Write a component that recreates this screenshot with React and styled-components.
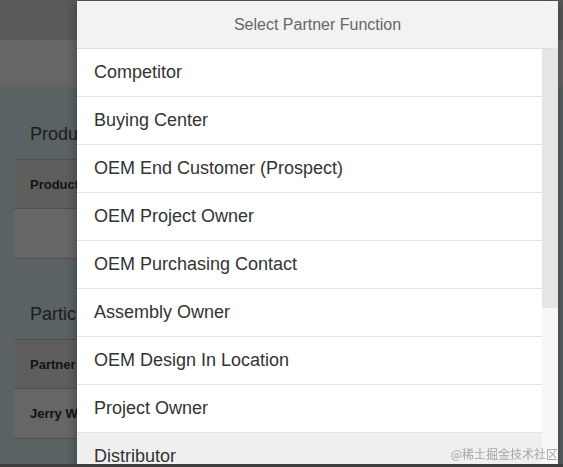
import styled, { createGlobalStyle } from "styled-components";

const GlobalStyle = createGlobalStyle`
  html, body {
    margin: 0;
    padding: 0;
    height: 100%;
    overflow: hidden;
  }
  body {
    font-family: "Liberation Sans", Arial, sans-serif;
    background: #e1f4f9;
  }
`;

const Page = styled.div`
  height: 100vh;
  display: flex;
  flex-direction: column;
`;

const TopBar = styled.div`
  height: 40px;
  background: #e0e0e0;
`;

const SubBar = styled.div`
  height: 47px;
  background: #ffffff;
`;

const Content = styled.div`
  flex: 1;
  padding: 0 14px;
  background: #e1f4f9;
`;

const Section = styled.section`
  padding-top: 35px;
`;

const SectionTitle = styled.h2`
  margin: 0 0 13px 16px;
  font-size: 18px;
  line-height: 24px;
  font-weight: normal;
  color: #4a4a4a;
`;

const Table = styled.div`
  border-top: 1px solid #c8c8c8;
  border-bottom: 1px solid #c8c8c8;
  margin-bottom: 8px;
`;

const Row = styled.div`
  display: grid;
  grid-template-columns: 529px 1fr;
  align-items: center;
  height: ${(p) => (p.$head ? 48 : 49)}px;
  background: ${(p) => (p.$head ? "#ebebe6" : "#ffffff")};
  border-top: ${(p) => (p.$head ? "none" : "1px solid #c8c8c8")};
`;

const Cell = styled.div`
  padding-left: 16px;
  font-size: 13px;
  font-weight: bold;
  color: #333;
  white-space: nowrap;
  overflow: hidden;
`;

const Overlay = styled.div`
  position: fixed;
  inset: 0;
  background: rgba(0, 0, 0, 0.6);
`;

const Dialog = styled.div`
  position: fixed;
  top: 1px;
  left: 77px;
  width: 481px;
  bottom: -120px;
  background: #fff;
  display: flex;
  flex-direction: column;
  box-shadow: 0 0 12px rgba(0, 0, 0, 0.35);
`;

const DialogHeader = styled.div`
  height: 47px;
  flex: none;
  display: flex;
  align-items: center;
  justify-content: center;
  background: #f2f2f2;
  border-bottom: 1px solid #dedede;
  font-size: 16px;
  color: #666;
`;

const ListArea = styled.div`
  flex: 1;
  display: flex;
  min-height: 0;
`;

const List = styled.ul`
  flex: 1;
  margin: 0;
  padding: 0;
  list-style: none;
`;

const Item = styled.li`
  height: 47px;
  display: flex;
  align-items: center;
  padding-left: 17px;
  font-size: 18px;
  color: #333;
  background: ${(p) => (p.$active ? "#efefef" : "#fff")};
  border-bottom: 1px solid #e3e3e3;
`;

const ScrollTrack = styled.div`
  width: 16px;
  flex: none;
  background: #f7f7f7;
`;

const ScrollThumb = styled.div`
  height: 259px;
  background: #e5e5e5;
`;

const Watermark = styled.div`
  position: fixed;
  right: 5px;
  bottom: 5px;
  font-family: "Noto Sans CJK SC", sans-serif;
  font-size: 12px;
  color: rgba(140, 140, 140, 0.75);
`;

const ScreenEdge = styled.div`
  position: fixed;
  left: 0;
  right: 0;
  bottom: 0;
  height: 3px;
  background: #3e3e3e;
`;

const functions = [
  "Competitor",
  "Buying Center",
  "OEM End Customer (Prospect)",
  "OEM Project Owner",
  "OEM Purchasing Contact",
  "Assembly Owner",
  "OEM Design In Location",
  "Project Owner",
  "Distributor",
  "Sales Employee",
];

export default function App() {
  return (
    <>
      <GlobalStyle />
      <Page>
        <TopBar />
        <SubBar />
        <Content>
          <Section>
            <SectionTitle>Products</SectionTitle>
            <Table>
              <Row $head>
                <Cell>Product</Cell>
                <Cell />
              </Row>
              <Row>
                <Cell />
                <Cell />
              </Row>
            </Table>
          </Section>
          <Section>
            <SectionTitle>Participants</SectionTitle>
            <Table>
              <Row $head>
                <Cell>Partner</Cell>
                <Cell>Function</Cell>
              </Row>
              <Row>
                <Cell>Jerry Wang</Cell>
                <Cell>le</Cell>
              </Row>
            </Table>
          </Section>
        </Content>
      </Page>
      <Overlay />
      <Dialog>
        <DialogHeader>Select Partner Function</DialogHeader>
        <ListArea>
          <List>
            {functions.map((f) => (
              <Item key={f} $active={f === "Distributor"}>
                {f}
              </Item>
            ))}
          </List>
          <ScrollTrack>
            <ScrollThumb />
          </ScrollTrack>
        </ListArea>
      </Dialog>
      <Watermark>@稀土掘金技术社区</Watermark>
      <ScreenEdge />
    </>
  );
}
